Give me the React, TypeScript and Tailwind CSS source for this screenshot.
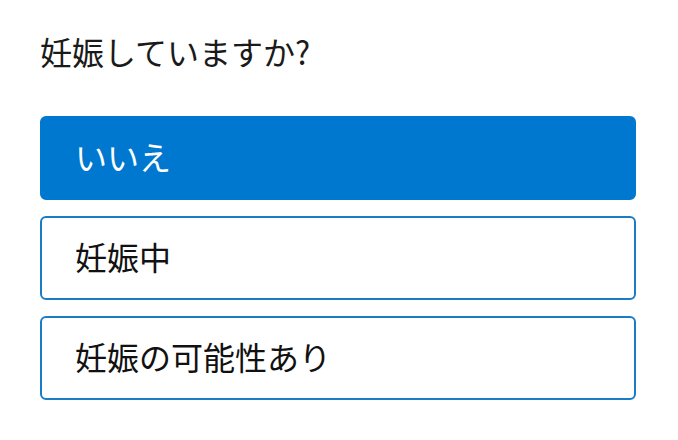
import { useState } from 'react';

const options = ['いいえ', '妊娠中', '妊娠の可能性あり'];

export default function App() {
  const [selected, setSelected] = useState(0);

  return (
    <div
      className="w-[678px] h-[440px] bg-white px-10 pt-[30px]"
      style={{ fontFamily: '"Noto Sans CJK JP", "Noto Sans", sans-serif' }}
    >
      <h2 className="text-[32px] leading-[42px] text-[#1a1a1a]">妊娠していますか?</h2>
      <div className="mt-[44px] flex flex-col gap-4">
        {options.map((label, i) => (
          <button
            key={label}
            onClick={() => setSelected(i)}
            className={
              i === selected
                ? 'h-[84px] w-[596px] rounded-md border-2 border-[#0078cf] bg-[#0078cf] pl-[33px] pb-1 text-left text-[32px] text-white'
                : 'h-[84px] w-[596px] rounded-md border-2 border-[#1a7cc4] bg-white pl-[33px] pb-1 text-left text-[32px] text-[#111]'
            }
          >
            {label}
          </button>
        ))}
      </div>
    </div>
  );
}
